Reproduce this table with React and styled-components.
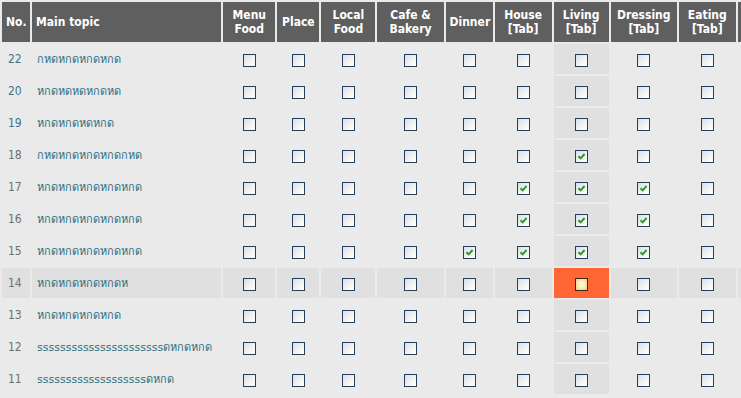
import React from 'react';
import styled, { createGlobalStyle } from 'styled-components';

const GlobalStyle = createGlobalStyle`
    html, body {
        margin: 0;
        padding: 0;
        overflow: hidden;
        background: #eaeaea;
    }
`;

const columns = [
    { key: 'menu', label: ['Menu', 'Food'], width: 52 },
    { key: 'place', label: ['Place'], width: 42 },
    { key: 'local', label: ['Local', 'Food'], width: 54 },
    { key: 'cafe', label: ['Cafe &', 'Bakery'], width: 66 },
    { key: 'dinner', label: ['Dinner'], width: 47 },
    { key: 'house', label: ['House', '[Tab]'], width: 57 },
    { key: 'living', label: ['Living', '[Tab]'], width: 55, shaded: true },
    { key: 'dressing', label: ['Dressing', '[Tab]'], width: 66 },
    { key: 'eating', label: ['Eating', '[Tab]'], width: 57 },
    // next column only peeks in at the right edge
    { key: 'more', label: [], width: 60 },
];

const topics = [
    { no: 22, title: 'กหดหกดหกดหกด', link: true },
    { no: 20, title: 'หกดหดหดหกดหด', link: true },
    { no: 19, title: 'หกดหกดหดหกด', link: true },
    { no: 18, title: 'กหดหกดหกดหกดกหด', checked: ['living'] },
    { no: 17, title: 'หกดหกดหกดหกดหกด', checked: ['house', 'living', 'dressing'] },
    { no: 16, title: 'หกดหกดหกดหกดหกด', checked: ['house', 'living', 'dressing'] },
    { no: 15, title: 'หกดหกดหกดหกดหกด', checked: ['dinner', 'house', 'living', 'dressing'] },
    { no: 14, title: 'หกดหกดหกดหกดห', active: 'living' },
    { no: 13, title: 'หกดหกดหกดหกด' },
    { no: 12, title: 'ssssssssssssssssssssssดหกดหกด' },
    { no: 11, title: 'sssssssssssssssssssดหกด' },
];

const Table = styled.table`
    table-layout: fixed;
    border-collapse: separate;
    border-spacing: 2px;
    width: 800px;
    font-family: Tahoma, "DejaVu Sans Condensed", "DejaVu Sans", sans-serif;
`;

const HeadCell = styled.th`
    height: 40px;
    padding: 0 4px;
    background: #5f5f5f;
    color: #ffffff;
    font-size: 12px;
    font-weight: bold;
    line-height: 14px;
    text-align: ${({ align }) => align || 'center'};
    vertical-align: middle;
    white-space: nowrap;
    overflow: hidden;
`;

const Row = styled.tr`
    height: 30px;
`;

const Cell = styled.td`
    padding: 0;
    background: ${({ active, shaded, highlight }) =>
        active ? '#ff6633' : shaded || highlight ? '#e0e0e0' : 'transparent'};
    text-align: center;
    vertical-align: middle;
`;

const NumberCell = styled(Cell)`
    padding-left: 6px;
    text-align: left;
    font-size: 12px;
    color: ${({ link }) => (link ? '#3d7585' : '#707070')};
`;

const TopicCell = styled(Cell)`
    padding-left: 5px;
    text-align: left;
    font-family: "DejaVu Sans", sans-serif;
    font-size: 11px;
    color: #2f6f80;
    white-space: nowrap;
    overflow: hidden;
`;

const Box = styled.span`
    display: inline-flex;
    align-items: center;
    justify-content: center;
    box-sizing: border-box;
    width: 13px;
    height: 13px;
    border: 1px solid ${({ hot }) => (hot ? '#3a2a1c' : '#24405c')};
    background: ${({ hot }) =>
        hot
            ? 'radial-gradient(circle, #fff6d0 30%, #f5c76a 100%)'
            : 'linear-gradient(135deg, #d9dee6 0%, #f4f4f2 60%, #ffffff 100%)'};
    vertical-align: middle;
`;

function Checkbox({ checked, hot }) {
    return (
        <Box role="checkbox" aria-checked={!!checked} hot={hot}>
            {checked && (
                <svg width="9" height="9" viewBox="0 0 9 9">
                    <path d="M1.5 4.2 L3.6 6.4 L7.6 2" fill="none" stroke="#21a121" strokeWidth="2" />
                </svg>
            )}
        </Box>
    );
}

export default function App() {
    return (
        <>
            <GlobalStyle />
            <Table>
                <colgroup>
                    <col style={{ width: 28 }} />
                    <col style={{ width: 189 }} />
                    {columns.map((c) => (
                        <col key={c.key} style={{ width: c.width }} />
                    ))}
                </colgroup>
                <thead>
                    <tr>
                        <HeadCell>No.</HeadCell>
                        <HeadCell align="left">Main topic</HeadCell>
                        {columns.map((c) => (
                            <HeadCell key={c.key}>
                                {c.label.map((line, i) => (
                                    <React.Fragment key={i}>
                                        {i > 0 && <br />}
                                        {line}
                                    </React.Fragment>
                                ))}
                            </HeadCell>
                        ))}
                    </tr>
                </thead>
                <tbody>
                    {topics.map((t) => {
                        const highlight = !!t.active;
                        return (
                            <Row key={t.no}>
                                <NumberCell link={t.link} highlight={highlight}>{t.no}</NumberCell>
                                <TopicCell highlight={highlight}>{t.title}</TopicCell>
                                {columns.map((c) => (
                                    <Cell
                                        key={c.key}
                                        shaded={c.shaded}
                                        highlight={highlight}
                                        active={t.active === c.key}
                                    >
                                        <Checkbox
                                            checked={(t.checked || []).includes(c.key)}
                                            hot={t.active === c.key}
                                        />
                                    </Cell>
                                ))}
                            </Row>
                        );
                    })}
                </tbody>
            </Table>
        </>
    );
}
